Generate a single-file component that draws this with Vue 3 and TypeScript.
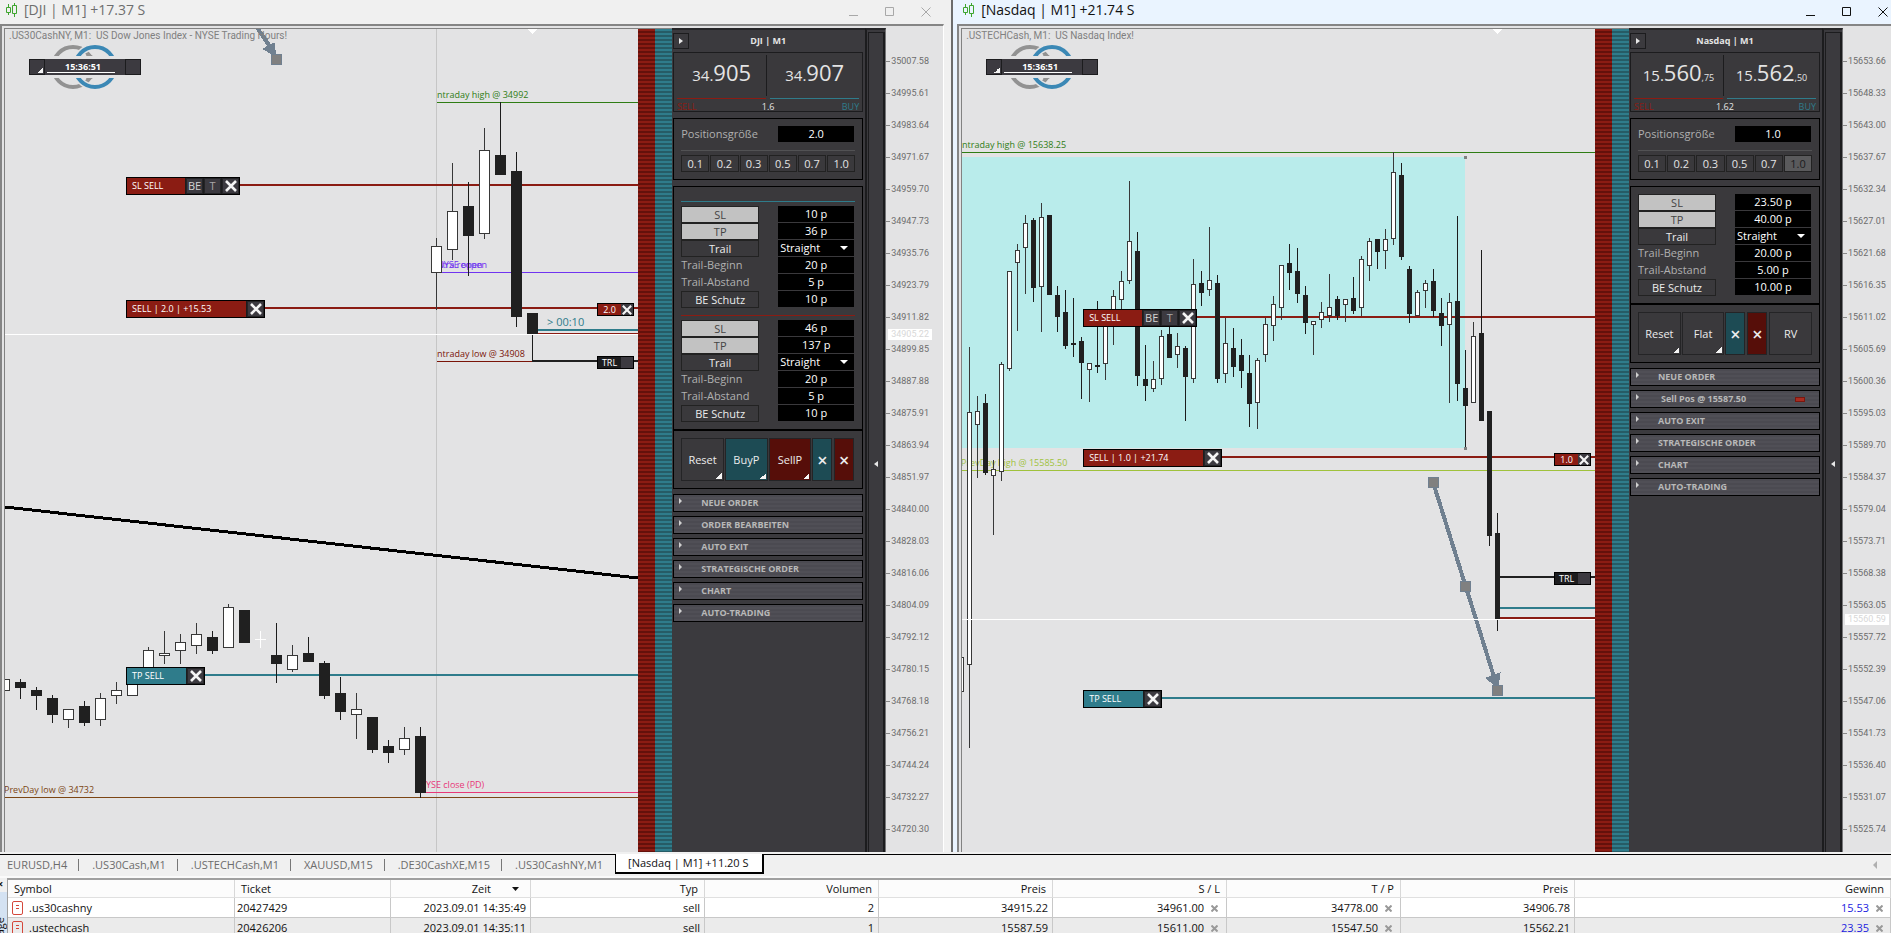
<script setup lang="ts">
import { ref } from 'vue'

type Tone = 'sell' | 'buy' | 'dark'
interface HLine { y: number; x: number; w: number; color: string; to?: number }
interface Label { x: number; y: number; text: string; color: string; big?: boolean }
interface Tag { x: number; y: number; body: number; text: string; tone: Tone; extra?: string[]; small?: boolean; blank?: boolean }
// index (column), high, body top, body bottom, low, 1 = rising
type Candle = [number, number, number, number, number, 0 | 1]
interface Field { kind: 'toggle' | 'trail' | 'text' | 'button'; name: string; value: string }
interface Action { text: string; tone: string; menu?: boolean; size: 'wide' | 'slim' }

const rows = (v: string[]): Field[] => [
  { kind: 'toggle', name: 'SL', value: v[0] },
  { kind: 'toggle', name: 'TP', value: v[1] },
  { kind: 'trail', name: 'Trail', value: 'Straight' },
  { kind: 'text', name: 'Trail-Beginn', value: v[2] },
  { kind: 'text', name: 'Trail-Abstand', value: v[3] },
  { kind: 'button', name: 'BE Schutz', value: v[4] },
]
const scale = (start: number, step: number) =>
  Array.from({ length: 25 }, (_, i) => (start - step * i).toFixed(2))

const RED = '#8b1c13'
const TEAL = '#2f7c8b'
const INK = '#202020'

const windows = [
  {
    id: 'dji', active: false, title: '[DJI | M1] +17.37 S',
    caption: '.US30CashNY, M1:  US Dow Jones Index - NYSE Trading Hours!',
    origin: 'translate(-5 -29)', first: 4, pitch: 16, bw: 10,
    zone: false, dayLine: 436, marker: 532, bid: 334,
    lines: [
      { y: 102, x: 437, w: 1, color: '#2f7d14' }, { y: 185, x: 240, w: 2, color: RED },
      { y: 272, x: 437, w: 1, color: '#7034f0' }, { y: 308, x: 264, w: 2, color: RED },
      { y: 330, x: 538, w: 2, color: TEAL }, { y: 333, x: 538, w: 1, color: RED },
      { y: 361, x: 437, w: 1, color: '#7a1408', to: 532 }, { y: 361, x: 532, w: 2, color: INK },
      { y: 675, x: 204, w: 2, color: TEAL }, { y: 792, x: 426, w: 1, color: '#e83878' },
      { y: 797, x: 5, w: 1, color: '#7c4614' },
    ] as HLine[],
    trend: [5, 507, 638, 578],
    labels: [
      { x: 437, y: 98, text: 'ntraday high @ 34992', color: '#2f7d14' },
      { x: 437, y: 268, text: 'NYSE open', color: '#7034f0' },
      { x: 437, y: 268, text: 'ntra reopen', color: '#7034f0' },
      { x: 437, y: 357, text: 'ntraday low @ 34908', color: '#7a1408' },
      { x: 547, y: 326, text: '> 00:10', color: TEAL, big: true },
      { x: 426, y: 788, text: 'YSE close (PD)', color: '#e83878' },
      { x: 4, y: 793, text: 'PrevDay low @ 34732', color: '#7c4614' },
    ] as Label[],
    candles: [
      [0, 679, 679, 691, 691, 1], [1, 679, 682, 688, 699, 0], [2, 687, 690, 696, 710, 0],
      [3, 695, 698, 715, 723, 0], [4, 709, 709, 720, 728, 1], [5, 701, 706, 723, 726, 0],
      [6, 693, 698, 720, 726, 1], [7, 682, 690, 696, 704, 1], [8, 676, 676, 696, 696, 1],
      [9, 647, 650, 677, 677, 1], [10, 631, 653, 656, 664, 1], [11, 634, 642, 651, 664, 1],
      [12, 623, 634, 646, 654, 1], [13, 631, 637, 651, 654, 0], [14, 604, 607, 648, 648, 1],
      [15, 610, 610, 643, 643, 0], [17, 623, 655, 664, 683, 0], [18, 645, 655, 670, 672, 1],
      [19, 637, 653, 662, 662, 0], [20, 661, 663, 696, 699, 0], [21, 677, 693, 712, 720, 0],
      [22, 693, 709, 715, 739, 1], [23, 717, 717, 750, 753, 0], [24, 740, 746, 753, 763, 0],
      [25, 727, 738, 750, 755, 1], [26, 727, 736, 793, 798, 0], [27, 238, 246, 273, 310, 1],
      [28, 163, 211, 250, 260, 1], [29, 182, 206, 236, 276, 0], [30, 128, 150, 234, 239, 1],
      [31, 102, 155, 175, 175, 0], [32, 152, 171, 317, 327, 0], [33, 313, 313, 335, 361, 0],
    ] as Candle[],
    doji: 'M255 639.5h11M260.5 631v17',
    arrow: { shaft: 'M256 26L271 48', head: '263,49 274,43 276,56', nodes: [[276, 59]] },
    tags: [
      { x: 126, y: 177, body: 58, text: 'SL SELL', tone: 'sell', extra: ['BE', 'T'] },
      { x: 126, y: 300, body: 119, text: 'SELL | 2.0 | +15.53', tone: 'sell' },
      { x: 126, y: 667, body: 59, text: 'TP SELL', tone: 'buy' },
      { x: 597, y: 303, body: 23, text: '2.0', tone: 'sell', small: true },
      { x: 597, y: 356, body: 23, text: 'TRL', tone: 'dark', small: true, blank: true },
    ] as Tag[],
    name: 'DJI | M1',
    sell: ['34.', '905', ''], buy: ['34.', '907', ''], spread: '1.6',
    lot: '2.0', lotActive: '',
    groups: [
      { rule: 'buy', fields: rows(['10 p', '36 p', '20 p', '5 p', '10 p']) },
      { rule: 'sell', fields: rows(['46 p', '137 p', '20 p', '5 p', '10 p']) },
    ],
    actions: [
      { text: 'Reset', tone: '', menu: true, size: 'wide' }, { text: 'BuyP', tone: 'buy', menu: true, size: 'wide' },
      { text: 'SellP', tone: 'sell', menu: true, size: 'wide' }, { text: '×', tone: 'buy', size: 'slim' },
      { text: '×', tone: 'sell', size: 'slim' },
    ] as Action[],
    sections: ['NEUE ORDER', 'ORDER BEARBEITEN', 'AUTO EXIT', 'STRATEGISCHE ORDER', 'CHART', 'AUTO-TRADING'],
    axis: scale(35007.58, 11.97), price: '34905.22',
  },
  {
    id: 'nasdaq', active: true, title: '[Nasdaq | M1] +21.74 S',
    caption: '.USTECHCash, M1:  US Nasdaq Index!',
    origin: 'translate(-962 -29)', first: 961, pitch: 8, bw: 4,
    zone: true, dayLine: 0, marker: 1497, bid: 619,
    lines: [
      { y: 152, x: 962, w: 1, color: '#2f7d14' }, { y: 317, x: 1197, w: 2, color: RED },
      { y: 457, x: 1221, w: 2, color: RED }, { y: 470, x: 962, w: 1, color: '#a0c23c' },
      { y: 577, x: 1500, w: 2, color: INK }, { y: 608, x: 1500, w: 2, color: TEAL },
      { y: 618, x: 1500, w: 2, color: RED }, { y: 698, x: 1161, w: 2, color: TEAL },
    ] as HLine[],
    trend: null as number[] | null,
    labels: [
      { x: 962, y: 148, text: 'ntraday high @ 15638.25', color: '#2f7d14' },
      { x: 961, y: 466, text: 'PrevDay high @ 15585.50', color: '#a0c23c' },
    ] as Label[],
    candles: [
      [0, 610, 657, 692, 692, 1], [1, 347, 412, 665, 748, 1], [2, 396, 411, 425, 478, 1],
      [3, 394, 403, 473, 475, 0], [4, 460, 469, 476, 535, 1], [5, 362, 364, 472, 481, 1],
      [6, 271, 271, 369, 371, 1], [7, 244, 250, 263, 331, 1], [8, 215, 223, 248, 294, 1],
      [9, 218, 220, 288, 302, 0], [10, 203, 217, 287, 332, 1], [11, 215, 215, 295, 295, 0],
      [12, 286, 295, 317, 332, 0], [13, 290, 312, 346, 349, 0], [14, 298, 343, 345, 357, 0],
      [15, 337, 341, 363, 399, 0], [16, 363, 363, 370, 402, 1], [17, 301, 365, 367, 373, 0],
      [18, 316, 316, 364, 380, 1], [19, 290, 296, 316, 345, 1], [20, 271, 281, 300, 310, 1],
      [21, 181, 241, 281, 284, 1], [22, 232, 251, 376, 386, 0], [23, 345, 379, 386, 401, 0],
      [24, 361, 379, 389, 392, 1], [25, 330, 336, 379, 385, 1], [26, 320, 334, 358, 358, 0],
      [27, 333, 346, 355, 368, 1], [28, 346, 348, 377, 421, 0], [29, 259, 284, 379, 383, 1],
      [30, 271, 283, 293, 306, 0], [31, 227, 280, 290, 296, 1], [32, 275, 283, 379, 383, 0],
      [33, 318, 343, 374, 383, 1], [34, 328, 348, 367, 377, 0], [35, 339, 355, 371, 388, 0],
      [36, 355, 373, 404, 427, 0], [37, 358, 360, 403, 429, 1], [38, 318, 324, 355, 362, 1],
      [39, 296, 304, 326, 341, 1], [40, 265, 265, 308, 320, 1], [41, 244, 263, 273, 290, 0],
      [42, 248, 271, 294, 303, 0], [43, 286, 295, 323, 334, 0], [44, 321, 321, 325, 355, 1],
      [45, 302, 312, 320, 328, 1], [46, 274, 307, 316, 322, 1], [47, 296, 299, 316, 320, 0],
      [48, 299, 299, 305, 322, 1], [49, 277, 298, 311, 314, 0], [50, 256, 259, 308, 316, 1],
      [51, 238, 241, 266, 281, 1], [52, 239, 239, 252, 269, 0], [53, 229, 239, 251, 269, 1],
      [54, 152, 172, 239, 245, 1], [55, 163, 175, 257, 260, 0], [56, 266, 269, 314, 323, 0],
      [57, 290, 292, 316, 316, 1], [58, 280, 283, 291, 308, 1], [59, 269, 281, 311, 317, 0],
      [60, 298, 313, 326, 346, 0], [61, 293, 302, 325, 403, 1], [62, 216, 301, 384, 401, 0],
      [63, 350, 388, 406, 448, 0], [64, 322, 336, 403, 403, 1], [65, 250, 333, 421, 421, 0],
      [66, 411, 411, 536, 546, 0], [67, 513, 533, 620, 631, 0],
    ] as Candle[],
    doji: '',
    arrow: { shaft: 'M1433 482L1495 680', head: '1486,678 1500,673 1498,688', nodes: [[1433, 482], [1465, 586], [1497, 690]] },
    tags: [
      { x: 1083, y: 309, body: 58, text: 'SL SELL', tone: 'sell', extra: ['BE', 'T'] },
      { x: 1083, y: 449, body: 119, text: 'SELL | 1.0 | +21.74', tone: 'sell' },
      { x: 1083, y: 690, body: 59, text: 'TP SELL', tone: 'buy' },
      { x: 1554, y: 453, body: 23, text: '1.0', tone: 'sell', small: true },
      { x: 1554, y: 572, body: 23, text: 'TRL', tone: 'dark', small: true, blank: true },
    ] as Tag[],
    name: 'Nasdaq | M1',
    sell: ['15.', '560', ',75'], buy: ['15.', '562', ',50'], spread: '1.62',
    lot: '1.0', lotActive: '1.0',
    groups: [{ rule: '', fields: rows(['23.50 p', '40.00 p', '20.00 p', '5.00 p', '10.00 p']) }],
    actions: [
      { text: 'Reset', tone: '', menu: true, size: 'wide' }, { text: 'Flat', tone: '', menu: true, size: 'wide' },
      { text: '×', tone: 'buy', size: 'slim' }, { text: '×', tone: 'sell', size: 'slim' },
      { text: 'RV', tone: '', size: 'wide' },
    ] as Action[],
    sections: ['NEUE ORDER', 'Sell Pos @ 15587.50', 'AUTO EXIT', 'STRATEGISCHE ORDER', 'CHART', 'AUTO-TRADING'],
    axis: scale(15653.66, 5.33), price: '15560.59',
  },
]
const lots = ['0.1', '0.2', '0.3', '0.5', '0.7', '1.0']
const originX = (id: string) => (id === 'dji' ? 5 : 962)
const tabs = ['EURUSD,H4', '.US30Cash,M1', '.USTECHCash,M1', 'XAUUSD,M15', '.DE30CashXE,M15', '.US30CashNY,M1', '[Nasdaq | M1] +11.20 S']
const current = ref(6)
const positions = [
  { symbol: '.us30cashny', ticket: '20427429', time: '2023.09.01 14:35:49', type: 'sell', vol: '2', open: '34915.22', sl: '34961.00', tp: '34778.00', price: '34906.78', gain: '15.53' },
  { symbol: '.ustechcash', ticket: '20426206', time: '2023.09.01 14:35:11', type: 'sell', vol: '1', open: '15587.59', sl: '15611.00', tp: '15547.50', price: '15562.21', gain: '23.35' },
]
</script>

<template>
  <div class="desk">
    <main class="windows">
      <section v-for="w in windows" :key="w.id" class="win" :class="{ active: w.active }">
        <header class="titlebar">
          <svg class="logo" width="12" height="14" viewBox="0 0 12 14" fill="none" stroke="#3ea52e"><path d="M2.5 1v3M2.5 10v2M.5 4.5h4v5h-4zM8.5 0v2M8.5 10v4M6.500 2.500h4v8h-4z" /></svg>
          <h2>{{ w.title }}</h2>
          <div class="controls">
            <button aria-label="Minimieren"><svg width="10" height="10"><path d="M0 8.500h9" /></svg></button>
            <button aria-label="Maximieren"><svg width="10" height="10"><path d="M.5 .5h8v8h-8z" /></svg></button>
            <button aria-label="Schließen"><svg width="10" height="10"><path d="M.5 .5l9 9M9.500 .5l-9 9" /></svg></button>
          </div>
        </header>
        <div class="frame">
          <div class="chart">
            <svg class="plot">
              <g :transform="w.origin">
                <rect v-if="w.zone" x="962" y="157" width="503" height="291" fill="#b9eceb" />
                <line v-if="w.dayLine" :x1="w.dayLine + 0.5" :x2="w.dayLine + 0.5" y1="29" y2="2000" stroke="#c6c6c6" />
                <path :d="`M${w.marker - 4} 29h9l-4.500 5z`" fill="#fff" />
                <line v-if="w.trend" :x1="w.trend[0]" :y1="w.trend[1]" :x2="w.trend[2]" :y2="w.trend[3]" stroke="#000" stroke-width="3" />
                <rect v-for="(l, i) in w.lines" :key="i" :x="l.x" :y="l.w === 2 ? l.y - 1 : l.y" :width="l.to ? l.to - l.x : 4000" :height="l.w" :fill="l.color" />
                <text v-for="(t, i) in w.labels" :key="i" :x="t.x" :y="t.y" :fill="t.color" :class="{ big: t.big }">{{ t.text }}</text>
                <g v-for="c in w.candles" :key="c[0]">
                  <rect :x="w.first + c[0] * w.pitch" :y="c[1]" width="1" :height="c[4] - c[1]" :fill="c[5] ? '#383838' : '#1c1c1c'" />
                  <rect :x="w.first + c[0] * w.pitch - w.bw / 2 + 0.5" :y="c[2] + 0.5" :width="w.bw" :height="c[3] - c[2] - 1" :fill="c[5] ? '#fff' : '#202020'" :stroke="c[5] ? '#383838' : '#202020'" />
                </g>
                <path v-if="w.doji" :d="w.doji" stroke="#fff" />
                <g fill="#808080" stroke="#708090">
                  <path :d="w.arrow.shaft" stroke-width="4" />
                  <polygon :points="w.arrow.head" fill="#708090" />
                  <rect v-for="n in w.arrow.nodes" :key="n[0]" :x="n[0] - 4.500" :y="n[1] - 4.500" width="10" height="10" />
                </g>
                <g v-if="w.zone" fill="#808080"><rect x="1464" y="156" width="3" height="3" /><rect x="1464" y="447" width="3" height="3" /></g>
                <rect x="0" :y="w.bid" width="5000" height="1" fill="#fff" />
              </g>
            </svg>
            <p class="caption">{{ w.caption }}</p>
            <div class="clock">
              <svg width="112" height="46" fill="none" stroke-width="4">
                <defs><clipPath :id="`band-${w.id}`"><path d="M0 0h112v12H0zM0 34h112v12H0z" /></clipPath></defs>
                <g :clip-path="`url(#band-${w.id})`">
                  <circle cx="44" cy="23" r="20" stroke="#929292" />
                  <circle cx="66" cy="23" r="20" stroke="#e3e3e4" stroke-width="7" />
                  <circle cx="66" cy="23" r="20" stroke="#3b88b5" />
                  <path d="M57 12l2-3 5 3M57 34l2 3 5-3" stroke="none" fill="#929292" />
                </g>
              </svg>
              <div class="clockbar"><button aria-label="Uhrmenü"></button><time>15:36:51</time><i></i></div>
            </div>
            <div v-for="t in w.tags" :key="t.y" class="tag" :class="[t.tone, { small: t.small }]" :style="{ left: t.x - originX(w.id) + 'px', top: t.y - 29 + 'px' }">
              <span :style="{ width: t.body + 'px' }">{{ t.text }}</span>
              <button v-for="e in t.extra" :key="e" :class="e.toLowerCase()">{{ e }}</button>
              <i v-if="t.blank" class="blank"></i>
              <button v-else aria-label="Schließen"><svg viewBox="0 0 12 12" stroke="#f4f4f4" stroke-width="2.600"><path d="M1 1l10 10M11 1L1 11" /></svg></button>
            </div>
          </div>
          <div class="stripes red"></div>
          <div class="stripes teal"></div>
          <aside class="panel">
            <header class="phead">
              <button class="play" aria-label="Einklappen"><svg width="4" height="6"><path d="M0 0l4 3-4 3z" fill="#e8e8e8" /></svg></button>
              <h3>{{ w.name }}</h3>
            </header>
            <div class="quotes">
              <div class="pair">
                <button>{{ w.sell[0] }}<b>{{ w.sell[1] }}</b><small>{{ w.sell[2] }}</small></button>
                <button>{{ w.buy[0] }}<b>{{ w.buy[1] }}</b><small>{{ w.buy[2] }}</small></button>
              </div>
              <div class="legend"><span class="s">SELL</span><span>{{ w.spread }}</span><span class="b">BUY</span></div>
            </div>
            <div class="box">
              <div class="row lot"><label :for="`${w.id}-lot`">Positionsgröße</label><input :id="`${w.id}-lot`" :value="w.lot" /></div>
              <div class="lots"><button v-for="l in lots" :key="l" :class="{ on: l === w.lotActive }">{{ l }}</button></div>
            </div>
            <div class="box params">
              <div v-for="(g, gi) in w.groups" :key="gi" class="group" :class="[g.rule && 'ruled', g.rule]">
                <div v-for="f in g.fields" :key="f.name" class="row">
                  <label v-if="f.kind === 'text'" :for="`${w.id}-${gi}-${f.name}`">{{ f.name }}</label>
                  <button v-else class="key" :class="{ lit: f.kind === 'toggle' }">{{ f.name }}</button>
                  <div v-if="f.kind === 'trail'" class="pick">
                    <select aria-label="Trail"><option>{{ f.value }}</option></select>
                    <svg width="8" height="4"><path d="M0 0h8L4 4z" fill="#fff" /></svg>
                  </div>
                  <input v-else :id="`${w.id}-${gi}-${f.name}`" :aria-label="f.name" :value="f.value" />
                </div>
              </div>
            </div>
            <div class="box actions">
              <button v-for="(a, i) in w.actions" :key="i" :class="[a.tone, a.size, { menu: a.menu }]">{{ a.text }}</button>
            </div>
            <nav class="sections">
              <button v-for="s in w.sections" :key="s" :class="{ pos: s.startsWith('Sell') }"><svg width="3" height="6"><path d="M0 0l3 3-3 3z" fill="#d0d0d0" /></svg>{{ s }}<i v-if="s.startsWith('Sell')"></i></button>
            </nav>
          </aside>
          <div class="rail"><button aria-label="Ausklappen"><svg width="4" height="6"><path d="M4 0L0 3l4 3z" fill="#e8e8e8" /></svg></button></div>
          <div class="axis">
            <ol><li v-for="p in w.axis" :key="p">{{ p }}</li></ol>
            <output :style="{ top: w.bid - 33 + 'px' }">{{ w.price }}</output>
          </div>
        </div>
      </section>
    </main>
    <nav class="tabs">
      <button v-for="(t, i) in tabs" :key="t" :class="{ on: i === current }" @click="current = i">{{ t }}</button>
      <svg class="more" width="4" height="8"><path d="M4 0L0 4l4 4z" fill="#b0b0b0" /></svg>
    </nav>
    <section class="terminal">
      <div class="side"><span class="close">×</span><span class="vert">age</span></div>
      <table>
        <colgroup><col class="c1" /><col class="c2" /><col class="c3" /><col class="c4" /><col class="c5" /><col class="c5" /><col class="c5" /><col class="c5" /><col class="c5" /><col /></colgroup>
        <thead>
          <tr><th>Symbol</th><th>Ticket</th><th class="sort">Zeit<svg width="7" height="4"><path d="M0 0h7L3.500 4z" fill="#111" /></svg></th><th>Typ</th><th>Volumen</th><th>Preis</th><th>S / L</th><th>T / P</th><th>Preis</th><th>Gewinn</th></tr>
        </thead>
        <tbody>
          <tr v-for="p in positions" :key="p.ticket">
            <td><svg class="doc" width="11" height="14" fill="none" stroke="#d4483c"><rect x=".5" y=".5" width="10" height="13" rx="1.500" /><path d="M4 4.500h3M4 7.500h3" /></svg>{{ p.symbol }}</td>
            <td>{{ p.ticket }}</td><td>{{ p.time }}</td><td>{{ p.type }}</td><td>{{ p.vol }}</td><td>{{ p.open }}</td>
            <td v-for="k in (['sl', 'tp'] as const)" :key="k">{{ p[k] }}<button class="x" :aria-label="`${k} entfernen`"><svg width="7" height="7"><path d="M.5 .5l6 6M6.500 .5l-6 6" /></svg></button></td>
            <td>{{ p.price }}</td>
            <td class="gain">{{ p.gain }}<button class="x" aria-label="Position schließen"><svg width="7" height="7"><path d="M.5 .5l6 6M6.500 .5l-6 6" /></svg></button></td>
          </tr>
        </tbody>
      </table>
    </section>
  </div>
</template>

<style>
body { margin: 0; }
</style>

<style scoped>
* { box-sizing: border-box; margin: 0; }
.desk { display: flex; flex-direction: column; height: 100vh; overflow: hidden; background: #f0f0f0; font: 11px/16px "Open Sans", "Noto Sans", sans-serif; color: #111; }
button, input, select { font: inherit; color: inherit; background: none; border: 0; border-radius: 0; padding: 0; }
.windows { flex: 1; display: flex; min-height: 0; }
.win { flex: 0 0 auto; width: 50.3%; display: flex; flex-direction: column; min-height: 0; padding-right: 7px; background: #f0f0f0; }
.win.active { flex: 1; width: auto; min-width: 0; border-left: 2px solid #6c6c6c; padding: 0 0 0 4px; background: #eaf4ff; }
.titlebar { height: 24px; flex: none; display: flex; align-items: center; padding-left: 6px; color: #6e6e6e; }
.active .titlebar { color: #111; }
.logo { margin-top: -4px; }
.titlebar h2 { flex: 1; margin: -4px 0 0 6px; font-size: 14px; line-height: 20px; font-weight: 400; white-space: nowrap; }
.controls { display: flex; gap: 26px; margin-right: 13px; }
.active .controls { margin-right: 3px; }
.controls button { width: 10px; height: 10px; display: flex; }
.controls svg { fill: none; stroke: #a8a8a8; overflow: visible; }
.active .controls svg { stroke: #111; }
.frame { flex: 1; min-height: 0; display: flex; border: 1px solid #6a6a6a; border-width: 2px 0 0 2px; border-color: #858585; background: #e3e3e4; border-right: 1px solid #fff; padding: 2px 0 0 2px; }
.active .frame { border-right: 0; }
.chart { flex: 1; min-width: 0; position: relative; overflow: hidden; border: 1px solid #828282; border-width: 1px 0 0 1px; background: #e3e3e4; }
.plot { position: absolute; inset: 0; width: 100%; height: 100%; shape-rendering: crispEdges; }
.plot text { font: 9px "Open Sans", sans-serif; }
.plot text.big { font-size: 11px; }
.caption { position: absolute; left: 4px; top: 1px; font: 10px/12px Roboto, sans-serif; color: #808080; white-space: pre; }
.clock { position: absolute; left: 24px; top: 15px; width: 112px; height: 46px; }
.clock svg { position: absolute; left: 0; top: 0; }
.clockbar { position: absolute; left: 0; top: 15px; width: 112px; height: 16px; display: flex; background: #3c3a40; color: #fff; }
.clockbar button, .clockbar i { width: 16px; border: 1px solid #1c1c1e; background: #3c3a40; }
.clockbar button { background: linear-gradient(135deg, transparent 50%, #f4f4f4 50%) no-repeat 7px 7px / 6px 6px #3c3a40; }
.clockbar time { flex: 1; margin: 0 10px 2px 2px; border-bottom: 1px solid #fff; padding-left: 4px; font: 700 9px/15px "Open Sans", sans-serif; text-align: center; }
.clockbar i { margin-left: auto; }
.tag { position: absolute; display: flex; height: 18px; border: 1px solid #000; background: #1c1c1e; color: #fff; font-size: 9px; line-height: 16px; }
.tag span { padding-left: 5px; white-space: nowrap; }
.sell span, .tag.sell > span { background: #8b1c13; }
.tag.buy > span { background: #2f7c8b; }
.tag button { width: 17px; margin-left: 1px; border: 1px solid #242426; background: #3c3a40; font-size: 11px; line-height: 14px; color: #d4d4d4; display: flex; align-items: center; justify-content: center; }
.tag button:last-child { width: 17px; }
.tag button.t { color: #a8a8a8; }
.tag button svg { width: 12px; height: 12px; flex: none; }
.tag.small { height: 13px; line-height: 11px; }
.tag.small span { padding-left: 0; text-align: center; }
.tag.small button, .tag.small .blank { width: 12px; margin: 0; border: 0; background: #3c3a40; }
.tag.small button svg { width: 10px; height: 10px; }
.stripes { flex: none; width: 17px; border-top: 1px solid #828282; }
.red { background: repeating-linear-gradient(#8b1c13 0 2px, #64110b 2px 4px); }
.teal { background: repeating-linear-gradient(#2f7c8b 0 2px, #265c66 2px 4px); }
.panel { flex: none; width: 193px; padding: 0 2px 0 1px; border-top: 2px solid #262628; background: #3b3a3e; color: #e4e4e4; }
.phead { height: 22px; padding-top: 3px; position: relative; }
.phead h3 { font-size: 9px; line-height: 16px; font-weight: 700; text-align: center; }
.play { position: absolute; left: 0; width: 16px; height: 16px; border: 1px solid #1c1c1e; display: flex; align-items: center; justify-content: center; }
.quotes { height: 60px; border: 1px solid #1c1c1e; padding: 2px 3px 0; background: #3a393c; }
.pair { display: grid; grid-template-columns: 1fr 1fr; gap: 4px; }
.pair button { height: 44px; border-bottom: 1px solid #8b1c13; font-size: 15px; line-height: 34px; padding: 0 0 9px; white-space: nowrap; }
.pair button + button { border-bottom-color: #2f7c8b; position: relative; }
.pair button + button::before { content: ""; position: absolute; left: -4px; top: 0; height: 41px; border-left: 1px solid #1c1c1e; }
.pair b { font-size: 22px; font-weight: 400; }
.pair small { font-size: 9px; }
.legend { display: grid; grid-template-columns: 1fr 1fr 1fr; padding-top: 2px; font-size: 9px; line-height: 11px; text-align: center; }
.legend .s { text-align: left; color: #8b1c13; }
.legend .b { text-align: right; color: #2f7c8b; }
.box { margin-top: 6px; border: 1px solid #000; padding: 7px; background: #3a393c; }
.row { display: flex; justify-content: space-between; height: 17px; }
.row label { color: #b0b0b0; line-height: 16px; }
.row input, .pick { width: 76px; height: 16px; margin-right: 1px; background: #000; color: #fff; text-align: center; }
.pick { display: flex; align-items: center; position: relative; }
.pick select { width: 100%; height: 16px; appearance: none; padding-left: 2px; }
.pick svg { position: absolute; right: 6px; pointer-events: none; }
.row.lot { padding-bottom: 0; }
.lots { display: flex; margin-top: 7px; padding-top: 4px; border-top: 1px solid #525254; }
.lots button { flex: 1; height: 17px; border: 1px solid #222; margin-right: 1px; line-height: 15px; }
.lots button:last-child { margin-right: 0; }
.lots .on { background: #5a5a5c; color: #1c1c1e; }
.key { width: 78px; height: 17px; line-height: 16px; border: 1px solid #222; color: #ececec; }
.key.lit { background: #c2c2c2; color: #444; }
.ruled { border-top: 1px solid #2f7c8b; padding-top: 4px; margin-top: 7px; }
.ruled.sell { border-top-color: #8b1c13; }
.params { padding-bottom: 7px; }
.actions { display: flex; gap: 1px; margin-top: 0; height: 59px; padding: 7px; border-top-width: 1px; }
.actions button { height: 43px; border: 1px solid #242426; color: #ececec; }
.actions .wide { width: 43px; }
.actions .slim { width: 20px; margin-right: 1px; font-size: 18px; font-weight: 600; }
.actions .buy { background: #1d4b54; }
.actions .sell { background: #560e09; }
.actions .menu { background-image: linear-gradient(135deg, transparent 50%, #f4f4f4 50%); background-repeat: no-repeat; background-position: right 1px bottom 1px; background-size: 6px 6px; }
.sections { display: flex; flex-direction: column; gap: 4px; margin-top: 5px; }
.sections button { display: flex; align-items: center; height: 18px; border: 1px solid #000; padding-left: 5px; background: repeating-linear-gradient(#4b4a51 0 2px, #504f56 2px 4px); color: #b8b8b8; font-size: 9px; font-weight: 700; }
.sections svg { margin: -4px 19px 0 0; }
.sections .pos svg { margin-right: 22px; }
.sections i { margin: 0 14px 0 auto; width: 10px; height: 5px; background: #a82c20; border: 1px solid #7a170f; }
.rail { flex: none; width: 21px; border-top: 2px solid #262628; border-left: 2px solid #1c1c1e; border-right: 1px solid #767678; background: #3b3a3e; padding: 2px 0 0 1px; }
.rail button { width: 100%; height: 100%; border: 1px solid #1c1c1e; border-right-width: 2px; border-bottom: 0; display: flex; align-items: center; justify-content: center; }
.rail svg { margin-top: 42px; }
.axis { flex: none; width: 57px; position: relative; overflow: hidden; font: 9px/32px Roboto, sans-serif; color: #6c6c6c; }
.active .axis { width: 48px; }
.axis ol { list-style: none; padding: 17px 0 0; }
.axis li { display: flex; align-items: center; height: 32px; }
.axis li::before { content: ""; width: 4px; border-top: 1px solid #888; margin-right: 1px; }
.axis output { position: absolute; left: 2px; width: 44px; height: 11px; padding-left: 3px; background: #fff; color: #d8d8d8; line-height: 11px; }
.tabs { flex: none; display: flex; height: 24px; margin-top: 2px; border-top: 1px solid #000; background: #f0f0f0; border-bottom: 2px solid #fafafa; color: #6c6c6c; }
.tabs button { position: relative; height: 20px; line-height: 18px; padding: 0 12px 0 13px; white-space: nowrap; }
.tabs button:first-child { padding-left: 7px; }
.tabs button:not(.on):not(:nth-last-child(3))::after { content: ""; position: absolute; right: 0; top: 4px; height: 12px; border-right: 1px solid #777; }
.tabs .on { margin-top: -1px; height: 20px; border: 1px solid #000; border-width: 0 2px 2px 1px; background: #fff; color: #111; padding: 0 13px 0 12px; }
.more { margin: 6px 14px 0 auto; }
.terminal { flex: none; display: flex; height: 55px; overflow: hidden; }
.side { width: 8px; flex: none; overflow: hidden; position: relative; background: linear-gradient(#f0f0f0 14px, #d4e2f2 14px); border-right: 1px solid #a0a0a0; }
.close { position: absolute; left: -3px; top: 0; font-size: 11px; line-height: 12px; font-weight: 700; }
.vert { position: absolute; left: -8px; bottom: -2px; writing-mode: vertical-rl; transform: rotate(180deg); line-height: 16px; }
table { flex: 1; width: 100%; table-layout: fixed; border-collapse: separate; border-spacing: 0; border-top: 2px solid #a0a0a0; background: #fff; }
.c1 { width: 227px; } .c2 { width: 156px; } .c3 { width: 140px; } .c4 { width: 174px; } .c5 { width: 174px; }
th { height: 18px; padding: 0 6px; font-weight: 400; text-align: right; border-right: 1px solid #d8d8d8; border-bottom: 1px solid #e0e0e0; background: #fcfcfc; line-height: 17px; }
th.sort { padding-right: 11px; }
th.sort svg { margin: 0 0 2px 21px; }
td { height: 20px; padding: 0 4px; text-align: right; border-right: 1px solid #c8c8c8; border-bottom: 1px solid #c8c8c8; line-height: 18px; white-space: nowrap; }
th:nth-child(-n+2), td:nth-child(-n+2) { text-align: left; }
td:nth-child(2) { padding-left: 2px; }
tbody tr:nth-child(2) { background: #ebebeb; }
.doc { vertical-align: middle; margin: -2px 6px 0 0; }
.x { margin: 0 4px 0 7px; line-height: 12px; }
.x svg { stroke: #999; stroke-width: 2; }
.gain { color: #2222e0; padding-right: 3px; }
</style>
